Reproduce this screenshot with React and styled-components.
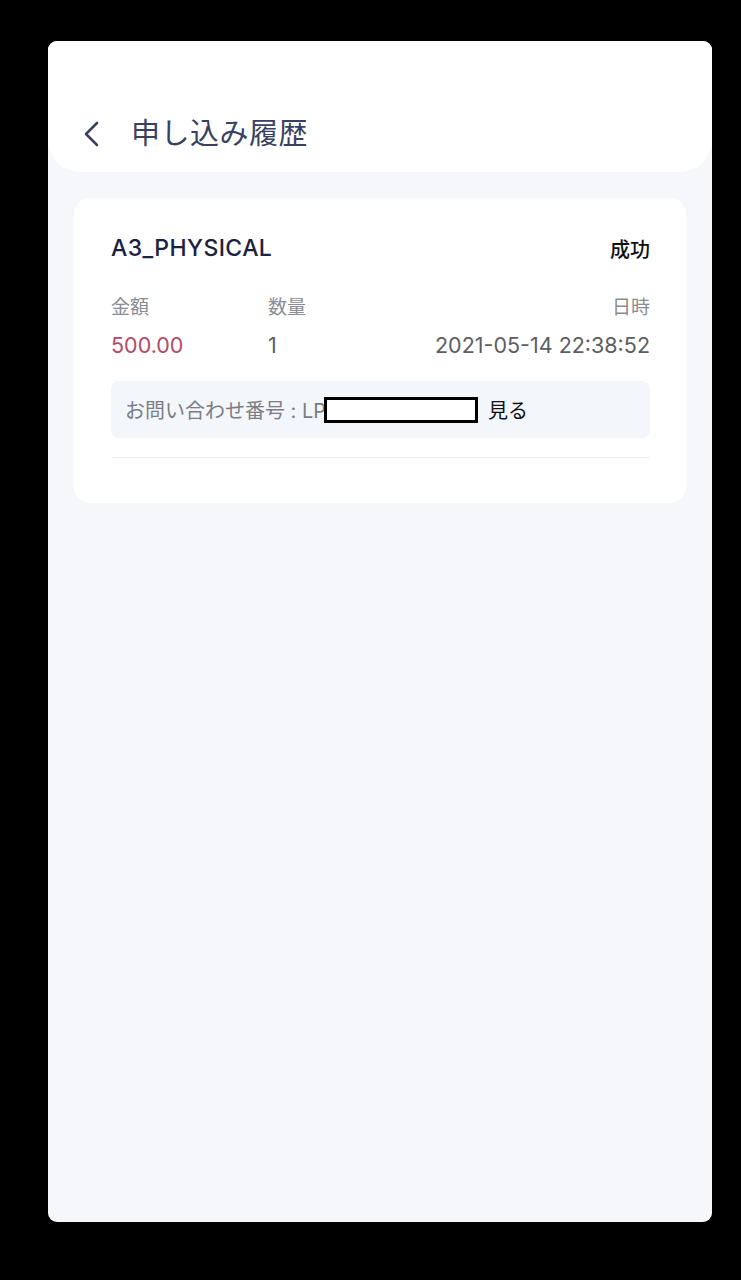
import styled, { createGlobalStyle } from "styled-components";

const GlobalStyle = createGlobalStyle`
    html, body {
        margin: 0;
        padding: 0;
        background: #000000;
    }
    body {
        font-family: Inter, "Noto Sans CJK JP", sans-serif;
    }
`;

export default function App() {
    return (
        <>
            <GlobalStyle />
            <SCTela>
                <SCFrame>
                    <SCHeader>
                        <SCBack aria-label="戻る">
                            <svg width="18" height="26" viewBox="0 0 18 26" fill="none">
                                <path d="M15 2 L4 13 L15 24" stroke="#3A4160" strokeWidth="2.6" strokeLinecap="round" strokeLinejoin="round" />
                            </svg>
                        </SCBack>
                        <h1>申し込み履歴</h1>
                    </SCHeader>
                    <SCLista>
                        <SCCard>
                            <SCTopoCard>
                                <h2>A3_PHYSICAL</h2>
                                <span>成功</span>
                            </SCTopoCard>
                            <SCGrade>
                                <SCLabel>金額</SCLabel>
                                <SCLabel>数量</SCLabel>
                                <SCLabel alinhar="right">日時</SCLabel>
                                <SCValor cor="#B44A66">500.00</SCValor>
                                <SCValor>1</SCValor>
                                <SCValor alinhar="right">2021-05-14 22:38:52</SCValor>
                            </SCGrade>
                            <SCConsulta>
                                <span>お問い合わせ番号 : LP</span>
                                <SCTarja />
                                <SCVer>見る</SCVer>
                            </SCConsulta>
                            <SCDivisor />
                        </SCCard>
                    </SCLista>
                </SCFrame>
            </SCTela>
        </>
    );
}

const SCTela = styled.div`
    width: 741px;
    height: 1280px;
    padding-top: 41px;
    box-sizing: border-box;
`;

const SCFrame = styled.div`
    width: 664px;
    height: 1181px;
    margin-left: 48px;
    background: #F5F7FB;
    border-radius: 9px;
    overflow: hidden;
`;

const SCHeader = styled.header`
    height: 131px;
    box-sizing: border-box;
    padding: 70px 0 0 34px;
    background: #FFFFFF;
    border-radius: 0 0 32px 32px;
    display: flex;
    align-items: flex-start;
    h1{
        margin: 0 0 0 31px;
        font-size: 29px;
        line-height: 46px;
        font-weight: 400;
        color: #3A4160;
        letter-spacing: 0.5px;
    }
`;

const SCBack = styled.div`
    height: 46px;
    display: flex;
    align-items: center;
`;

const SCLista = styled.main`
    padding: 26px 26px 0 26px;
`;

const SCCard = styled.div`
    background: #FFFFFF;
    border-radius: 16px;
    padding: 35px 36px 45px 37px;
`;

const SCTopoCard = styled.div`
    display: flex;
    justify-content: space-between;
    align-items: center;
    height: 30px;
    h2{
        margin: 0;
        font-size: 23px;
        font-weight: 500;
        color: #1B2140;
        letter-spacing: 0.4px;
    }
    span{
        font-size: 20px;
        font-weight: 500;
        color: #111111;
    }
`;

const SCGrade = styled.div`
    display: grid;
    grid-template-columns: 157px 1fr auto;
    margin-top: 32px;
    row-gap: 10px;
`;

const SCLabel = styled.span`
    font-size: 19px;
    line-height: 26px;
    color: #888C94;
    text-align: ${(props) => props.alinhar || "left"};
`;

const SCValor = styled.span`
    font-size: 21.5px;
    line-height: 28px;
    color: ${(props) => props.cor || "#5C5E63"};
    text-align: ${(props) => props.alinhar || "left"};
`;

const SCConsulta = styled.div`
    margin-top: 22px;
    height: 57px;
    box-sizing: border-box;
    padding: 0 14px;
    background: #F3F6FB;
    border-radius: 8px;
    display: flex;
    align-items: center;
    span{
        font-size: 20px;
        color: #7A7D84;
        white-space: pre;
    }
`;

const SCTarja = styled.div`
    width: 154px;
    height: 26px;
    box-sizing: border-box;
    border: 3.5px solid #000000;
    background: #FFFFFF;
    margin-left: -2px;
`;

const SCVer = styled.span`
    && {
        color: #111111;
        margin-left: 10px;
    }
`;

const SCDivisor = styled.div`
    margin-top: 19px;
    height: 1px;
    background: #EFF0F3;
`;
